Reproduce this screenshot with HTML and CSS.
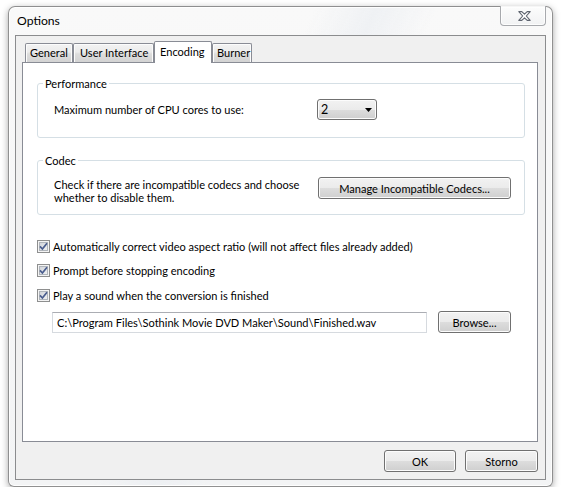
FILE: index.html
```html
<!DOCTYPE html>
<html>
<head>
<meta charset="utf-8">
<title>Options</title>
<link rel="stylesheet" href="styles.css">
</head>
<body>
<div class="window">
  <div class="titlebar">
    <span class="title">Options</span>
    <div class="close">
      <svg width="13" height="10" viewBox="0 0 13 10"><path d="M0.8 0.6H3.8L6.5 3.2L9.2 0.6H12.2L8.3 5L12.2 9.4H9.2L6.5 6.8L3.8 9.4H0.8L4.7 5Z" fill="#fff" stroke="#5f6570" stroke-width="1.1" stroke-linejoin="round"/></svg>
    </div>
  </div>
  <div class="client">
    <div class="tabs">
      <div class="tab tab-general">General</div>
      <div class="tab tab-ui">User Interface</div>
      <div class="tab tab-encoding active">Encoding</div>
      <div class="tab tab-burner">Burner</div>
    </div>
    <div class="panel">
      <fieldset class="group perf">
        <legend>Performance</legend>
        <div class="grow">
          <span class="label">Maximum number of CPU cores to use:</span>
          <div class="combo"><span>2</span><svg width="7" height="4" viewBox="0 0 7 4"><path d="M0 0H7L3.5 4Z" fill="#000"/></svg></div>
        </div>
      </fieldset>
      <fieldset class="group codec">
        <legend>Codec</legend>
        <div class="grow grow-codec">
          <span class="label multi">Check if there are incompatible codecs and choose<br>whether to disable them.</span>
          <div class="btn btn-manage">Manage Incompatible Codecs...</div>
        </div>
      </fieldset>
      <div class="checks">
        <div class="check"><span class="box"><svg width="9" height="9" viewBox="0 0 9 9"><path d="M1 4.4L3.4 7L8 1.2" fill="none" stroke="#4a5d8e" stroke-width="1.7"/></svg></span><span>Automatically correct video aspect ratio (will not affect files already added)</span></div>
        <div class="check"><span class="box"><svg width="9" height="9" viewBox="0 0 9 9"><path d="M1 4.4L3.4 7L8 1.2" fill="none" stroke="#4a5d8e" stroke-width="1.7"/></svg></span><span>Prompt before stopping encoding</span></div>
        <div class="check check-last"><span class="box"><svg width="9" height="9" viewBox="0 0 9 9"><path d="M1 4.4L3.4 7L8 1.2" fill="none" stroke="#4a5d8e" stroke-width="1.7"/></svg></span><span>Play a sound when the conversion is finished</span></div>
      </div>
      <div class="filerow">
        <div class="field">C:\Program Files\Sothink Movie DVD Maker\Sound\Finished.wav</div>
        <div class="btn btn-browse">Browse...</div>
      </div>
    </div>
    <div class="footer">
      <div class="btn btn-ok">OK</div>
      <div class="btn btn-cancel">Storno</div>
    </div>
  </div>
</div>
</body>
</html>
```

FILE: styles.css
```css
html, body {
  margin: 0;
  padding: 0;
  background: #ffffff;
}

body {
  font-family: "Lato", sans-serif;
  font-size: 11.05px;
  color: #000;
}

.window {
  box-sizing: border-box;
  width: 545px;
  height: 481px;
  margin: 6px 0 0 8px;
  border: 1px solid rgba(60, 60, 60, 0.55);
  border-radius: 7px 7px 6px 6px;
  background:
    linear-gradient(115deg, rgba(255,255,255,0) 0%, rgba(255,255,255,0) 40%, rgba(235,238,242,0.7) 48%, rgba(255,255,255,0) 56%, rgba(255,255,255,0) 100%),
    linear-gradient(#f9f9f9, #f3f4f5);
  box-shadow: 0 2px 7px rgba(0, 0, 0, 0.35), inset 0 0 0 1px rgba(255,255,255,0.9);
  display: flex;
  flex-direction: column;
}

.titlebar {
  height: 28px;
  display: flex;
  align-items: flex-start;
  flex: none;
}

.title {
  padding: 6px 0 0 8px;
  line-height: 15px;
  font-size: 12.2px;
}

.close {
  box-sizing: border-box;
  margin: -1px 6px 0 auto;
  width: 46px;
  height: 20px;
  border: 1px solid #a7a9ad;
  border-top: none;
  border-radius: 0 0 4px 4px;
  background: linear-gradient(rgba(255,255,255,0.6), rgba(236,238,240,0.6));
  box-shadow: inset 0 0 0 1px rgba(255,255,255,0.8);
  display: flex;
  align-items: center;
  justify-content: center;
}

.close svg {
  display: block;
  margin: 0 0 0 2px;
}

.client {
  flex: 1;
  margin: 0 6px 6px;
  border: 1px solid #8b8c8e;
  background: #f0f0f0;
  padding: 5px 7px 7px 6px;
  display: flex;
  flex-direction: column;
  min-height: 0;
}

.tabs {
  display: flex;
  align-items: flex-end;
  height: 21px;
  padding-left: 3px;
  flex: none;
}

.tab {
  box-sizing: border-box;
  height: 19px;
  border: 1px solid #898c95;
  border-bottom: none;
  border-radius: 2px 2px 0 0;
  padding: 0 0 0 4px;
  line-height: 17px;
  background: linear-gradient(#f3f3f3 0%, #ebebeb 45%, #dddddd 55%, #d3d3d3 100%);
  box-shadow: inset 1px 1px 0 #fcfcfc, inset -1px 0 0 #fcfcfc;
  white-space: nowrap;
}

.tab-general { width: 48px; }
.tab-ui { width: 81px; padding-left: 6px; }
.tab-encoding { width: 58px; }
.tab-burner { width: 40px; }

.tab.active {
  height: 22px;
  margin-bottom: -1px;
  padding-left: 5px;
  line-height: 19px;
  background: #fff;
  box-shadow: none;
  position: relative;
  z-index: 1;
}

.panel {
  flex: 1;
  border: 1px solid #898c95;
  background: #fff;
  padding: 13px 12px 0 14px;
  min-height: 0;
}

.group {
  margin: 0;
  padding: 8px 0 17px 5px;
  border: 1px solid #d5dfe5;
  border-radius: 3px;
  min-width: 0;
}

.group legend {
  padding: 0 2px;
  line-height: 15px;
}

.grow {
  margin-left: 11px;
  display: grid;
  grid-template-columns: 263px auto;
  align-items: center;
  justify-content: start;
  line-height: 15px;
  white-space: nowrap;
}

.codec {
  margin-top: 15px;
  padding: 9px 0 10px 5px;
}

.grow-codec {
  grid-template-columns: 264px auto;
  align-items: start;
}

.label.multi {
  line-height: 13px;
  padding-top: 1px;
}

.combo {
  box-sizing: border-box;
  width: 60px;
  height: 21px;
  border: 1px solid #707070;
  border-radius: 3px;
  background: linear-gradient(#f2f2f2 0%, #ebebeb 50%, #dddddd 51%, #cfcfcf 100%);
  box-shadow: inset 0 0 0 1px #fcfcfc;
  display: flex;
  align-items: center;
  justify-content: space-between;
  padding: 0 4px 0 3px;
  font-size: 12.5px;
}

.combo svg {
  display: block;
}

.btn {
  box-sizing: border-box;
  height: 22px;
  border: 1px solid #707070;
  border-radius: 3px;
  background: linear-gradient(#f2f2f2 0%, #ebebeb 50%, #dddddd 51%, #cfcfcf 100%);
  box-shadow: inset 0 0 0 1px #fcfcfc;
  display: flex;
  align-items: center;
  justify-content: center;
  line-height: 15px;
  white-space: nowrap;
}

.btn-manage {
  width: 193px;
}

.checks {
  margin-top: 25px;
  display: flex;
  flex-direction: column;
}

.check {
  display: flex;
  align-items: center;
  height: 13px;
  line-height: 15px;
  gap: 3px;
  white-space: nowrap;
}

.check + .check {
  margin-top: 11px;
}

.check.check-last {
  margin-top: 12px;
}

.box {
  box-sizing: border-box;
  width: 13px;
  height: 13px;
  border: 1px solid #8e8f8f;
  background: linear-gradient(135deg, #c9cdd3 0%, #e4e6e9 55%, #f6f6f6 100%);
  box-shadow: inset 0 0 0 1px #f4f4f4, inset 0 0 0 2px #b0b5bb;
  display: flex;
  align-items: center;
  justify-content: center;
  flex: none;
}

.box svg {
  display: block;
}

.filerow {
  margin-top: 9px;
  display: flex;
  align-items: flex-start;
}

.field {
  box-sizing: border-box;
  margin: 1px 0 0 15px;
  width: 375px;
  height: 21px;
  border: 1px solid #d6dadf;
  border-top-color: #abadb3;
  background: #fff;
  padding-left: 4px;
  line-height: 19px;
  white-space: nowrap;
}

.btn-browse {
  margin-left: 11px;
  width: 73px;
}

.footer {
  margin-top: 8px;
  display: flex;
  justify-content: flex-end;
  gap: 9px;
  flex: none;
}

.btn-ok {
  width: 72px;
}

.btn-cancel {
  width: 73px;
}
```
